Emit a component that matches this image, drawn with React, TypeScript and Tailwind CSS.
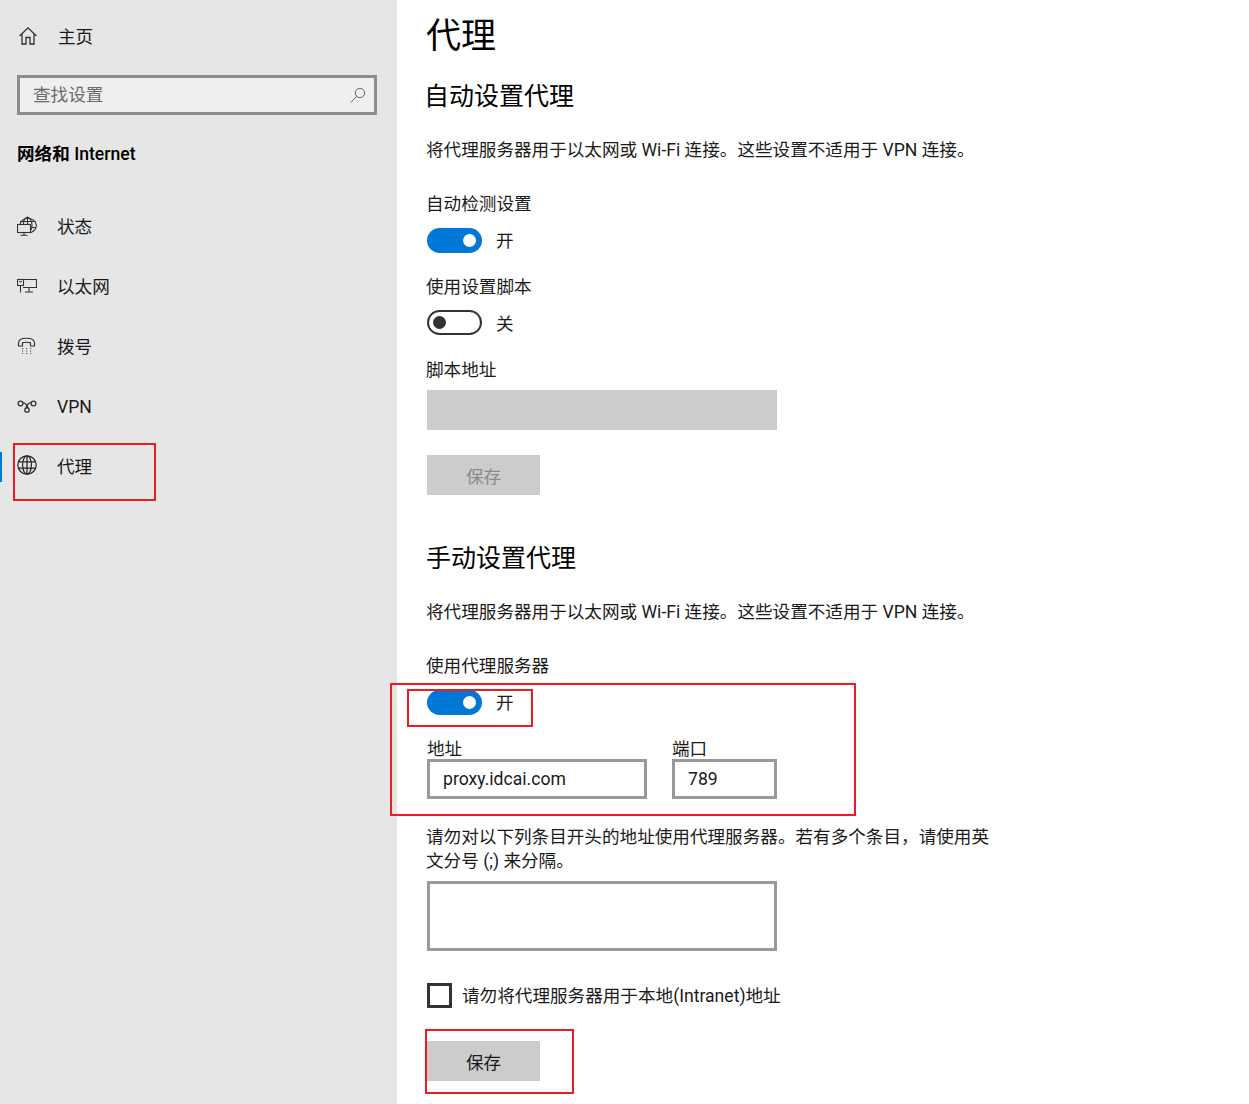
const FONT = "font-['Roboto','Noto_Sans_CJK_SC',sans-serif]"

function HomeIcon() {
  return (
    <svg width="20" height="20" viewBox="0 0 20 20" fill="none" stroke="#333" strokeWidth="1.3">
      <path d="M1.5 10 L10 1.8 L18.5 10" />
      <path d="M4 8 V18 H8 V11.5 H12 V18 H16 V8" />
    </svg>
  )
}

function StatusIcon() {
  return (
    <svg width="20" height="20" viewBox="0 0 20 20" fill="none" stroke="#333" strokeWidth="1.1">
      <path d="M3 8 A8.6 8.6 0 0 1 19.4 9 A8.6 8.6 0 0 1 14 16.5" />
      <path d="M6.5 8 C6.5 4 8.5 1.5 10.5 1 C13 1.5 15 5 15 9 C15 11 14.7 12.5 14 14" />
      <path d="M10.5 1 V8 M3 5.5 H18.5 M15 11.5 H19" />
      <rect x="0.5" y="8.5" width="13" height="8" fill="#e6e6e6" />
      <path d="M7 16.5 V19 M3.5 19.3 H10.5" />
    </svg>
  )
}

function EthernetIcon() {
  return (
    <svg width="20" height="20" viewBox="0 0 20 20" fill="none" stroke="#333" strokeWidth="1.1">
      <path d="M6 3.5 H19.5 V11.5 H6" />
      <rect x="0.5" y="3.5" width="6" height="6" />
      <path d="M2 5.8 H5 M3.5 9.5 V16.5 M8 16 H16 M12 11.5 V16" />
    </svg>
  )
}

function DialIcon() {
  return (
    <svg width="20" height="20" viewBox="0 0 20 20" fill="none" stroke="#333">
      <path d="M1.5 7 C1.5 3.5 5.5 2.2 9.5 2.2 C13.5 2.2 17.5 3.5 17.5 7 V10 H13.5 V6.8 C12 6 7 6 5.5 6.8 V10 H1.5 Z" strokeWidth="1.1" />
      <path
        d="M5 12.5 h1.2 M9 12.5 h1.2 M13 12.5 h1.2 M5 15 h1.2 M9 15 h1.2 M13 15 h1.2 M5 17.5 h1.2 M9 17.5 h1.2 M13 17.5 h1.2"
        strokeWidth="1.2"
        stroke="#555"
      />
    </svg>
  )
}

function VpnIcon() {
  return (
    <svg width="20" height="20" viewBox="0 0 20 20" fill="none" stroke="#333" strokeWidth="1.3">
      <circle cx="3.5" cy="7.5" r="2.4" />
      <circle cx="16.5" cy="7.5" r="2.4" />
      <circle cx="10" cy="14" r="2.2" />
      <path d="M5.7 6.6 C8 6.6 10.5 9 11 12 M14.3 6.6 C12 6.6 9.5 9 9 12" />
    </svg>
  )
}

function GlobeIcon() {
  return (
    <svg width="20" height="20" viewBox="0 0 20 20" fill="none" stroke="#222" strokeWidth="1.2">
      <circle cx="10" cy="10" r="9.2" />
      <ellipse cx="10" cy="10" rx="4.4" ry="9.2" />
      <path d="M10 .8 V19.2 M1.5 6.8 H18.5 M1.5 13.2 H18.5" />
    </svg>
  )
}

function SearchIcon() {
  return (
    <svg width="16" height="16" viewBox="0 0 16 16" fill="none" stroke="#666" strokeWidth="1">
      <circle cx="10" cy="6" r="4.7" />
      <path d="M6.7 9.4 L.8 15.4" />
    </svg>
  )
}

const navItems = [
  { label: "状态", icon: <StatusIcon /> },
  { label: "以太网", icon: <EthernetIcon /> },
  { label: "拨号", icon: <DialIcon /> },
  { label: "VPN", icon: <VpnIcon /> },
  { label: "代理", icon: <GlobeIcon />, active: true },
]

function Sidebar() {
  return (
    <aside className="relative w-[397px] shrink-0 bg-[#e6e6e6] text-[17.6px] text-[#1a1a1a]">
      <div className="mt-[6px] flex h-[60px] items-center pl-[18px]">
        <HomeIcon />
        <span className="ml-[20px] mt-[2px]">主页</span>
      </div>
      <div className="ml-[17px] mt-[9px] flex h-[40px] w-[360px] items-center justify-between border-[3px] border-[#8c8c8c] bg-[#efefef] pl-[13px] pr-[8px] text-[#6b6b6b]">
        <span>查找设置</span>
        <SearchIcon />
      </div>
      <div className="mt-[26px] h-[24px] pl-[17px] leading-[26px] font-bold text-black">
        网络和 <span className="font-medium">Internet</span>
      </div>
      <nav className="mt-[31px]">
        {navItems.map((item) => (
          <div key={item.label} className="relative flex h-[60px] items-center pl-[17px]">
            {item.active && <div className="absolute left-0 top-[16px] h-[30px] w-[2px] bg-[#0078d7]" />}
            <span className={item.active ? "mb-[2px]" : ""}>{item.icon}</span>
            <span className="ml-[20px] mt-[2px]">{item.label}</span>
          </div>
        ))}
      </nav>
    </aside>
  )
}

function Toggle({ on, className }: { on: boolean; className: string }) {
  return (
    <div className={`flex h-[24px] items-center ${className}`}>
      {on ? (
        <div className="flex h-[25px] w-[55px] items-center justify-end rounded-full bg-[#0078d7] pr-[6px]">
          <div className="h-[13px] w-[13px] rounded-full bg-white" />
        </div>
      ) : (
        <div className="flex h-[25px] w-[55px] items-center rounded-full border-[2px] border-[#333] pl-[4px]">
          <div className="h-[13px] w-[13px] rounded-full bg-[#333]" />
        </div>
      )}
      <span className={`ml-[14px] ${on ? "mt-[3px]" : "mt-[5px]"}`}>{on ? "开" : "关"}</span>
    </div>
  )
}

function Label({ className, children }: { className: string; children: React.ReactNode }) {
  return <div className={`-ml-px h-[24px] leading-[24px] ${className}`}>{children}</div>
}

function SaveButton({ disabled, className }: { disabled?: boolean; className: string }) {
  return (
    <div
      className={`flex h-[40px] w-[113px] items-center justify-center bg-[#cccccc] pt-[4px] ${disabled ? "text-[#8a8a8a]" : "text-[#1a1a1a]"} ${className}`}
    >
      保存
    </div>
  )
}

const DESC = "将代理服务器用于以太网或 Wi-Fi 连接。这些设置不适用于 VPN 连接。"

function Main() {
  return (
    <main className="pl-[30px] text-[17.6px] text-[#1a1a1a]">
      <h1 className="-ml-px h-[70px] text-[35px] leading-[74px] text-black">代理</h1>
      <h2 className="mt-[6px] -ml-[3px] h-[40px] text-[25px] leading-[42px] text-black">自动设置代理</h2>
      <Label className="mt-[22px]">{DESC}</Label>
      <Label className="mt-[30px]">自动检测设置</Label>
      <Toggle on className="mt-[12px]" />
      <Label className="mt-[23px]">使用设置脚本</Label>
      <Toggle on={false} className="mt-[11px]" />
      <Label className="mt-[24px]">脚本地址</Label>
      <div className="mt-[8px] h-[40px] w-[350px] bg-[#cccccc]" />
      <SaveButton disabled className="mt-[25px]" />
      <h2 className="-ml-px mt-[43px] h-[40px] text-[25px] leading-[42px] text-black">手动设置代理</h2>
      <Label className="mt-[22px]">{DESC}</Label>
      <Label className="mt-[30px]">使用代理服务器</Label>
      <Toggle on className="mt-[12px]" />
      <div className="mt-[23px] flex gap-[25px]">
        <div>
          <div className="h-[22px] leading-[24px]">地址</div>
          <div className="flex h-[40px] w-[220px] items-center border-[3px] border-[#999999] pl-[13px]">proxy.idcai.com</div>
        </div>
        <div>
          <div className="h-[22px] leading-[24px]">端口</div>
          <div className="flex h-[40px] w-[105px] items-center border-[3px] border-[#999999] pl-[13px]">789</div>
        </div>
      </div>
      <p className="-ml-px mb-[8px] mt-[26px] w-[565px] leading-[24px]">
        请勿对以下列条目开头的地址使用代理服务器。若有多个条目，请使用英文分号 (;) 来分隔。
      </p>
      <div className="h-[70px] w-[350px] border-[3px] border-[#999999]" />
      <div className="mt-[32px] flex h-[25px] items-center">
        <div className="h-[25px] w-[25px] border-[3px] border-[#333]" />
        <span className="ml-[10px] mt-[2px]">请勿将代理服务器用于本地(Intranet)地址</span>
      </div>
      <SaveButton className="mt-[33px]" />
    </main>
  )
}

export default function App() {
  return (
    <div className={`relative flex h-[1104px] w-[1249px] overflow-hidden bg-white ${FONT}`}>
      <Sidebar />
      <Main />
      {/* red marker boxes drawn on top of the screenshot */}
      <div className="absolute left-[13px] top-[443px] h-[58px] w-[143px] border-2 border-[#ed1c24]" />
      <div className="absolute left-[390px] top-[683px] h-[133px] w-[466px] border-2 border-[#ed1c24]" />
      <div className="absolute left-[407px] top-[689px] h-[38px] w-[126px] border-2 border-[#ed1c24]" />
      <div className="absolute left-[425px] top-[1029px] h-[65px] w-[149px] border-2 border-[#ed1c24]" />
    </div>
  )
}
